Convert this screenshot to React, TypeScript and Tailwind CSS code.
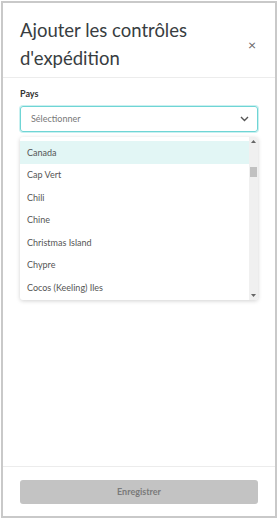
import React from "react";

const countries = [
  "Canada",
  "Cap Vert",
  "Chili",
  "Chine",
  "Christmas Island",
  "Chypre",
  "Cocos (Keeling) Iles",
];

export default function App() {
  return (
    <div
      className="w-[280px] h-[522px] bg-white p-[1px]"
      style={{ fontFamily: 'Lato, "Open Sans", sans-serif' }}
    >
      <div className="w-[276px] h-[517px] border-2 border-[#c9c9c9] flex flex-col">
        <div className="flex items-center justify-between pl-[17px] pr-[19px] pt-[14px] pb-[6px] border-b border-[#ececec] h-[75px]">
          <h1 className="text-[18.5px] leading-[28px] text-[#383d41] font-normal">
            Ajouter les contrôles d'expédition
          </h1>
          <span className="text-[#666] text-[14px] leading-none mt-[2px] ml-[10px]">×</span>
        </div>
        <div className="flex-1 px-[17px] pt-[10px]">
          <div className="text-[9px] font-bold text-[#333] mb-[6px] leading-[12px]">Pays</div>
          <div className="h-[26px] border border-[#6fd5d5] rounded-[3px] shadow-[0_0_0_1px_#c9f0f0] flex items-center justify-between pl-[10px] pr-[8px]">
            <span className="text-[9px] text-[#777]">Sélectionner</span>
            <svg width="9" height="6" viewBox="0 0 9 6">
              <path d="M1 1l3.5 3.5L8 1" stroke="#555" strokeWidth="1.4" fill="none" />
            </svg>
          </div>
          <div className="mt-[5px] h-[163px] bg-white rounded-[3px] shadow-[0_1px_4px_rgba(0,0,0,0.18)] flex overflow-hidden">
            <div className="flex-1 pt-[4px]">
              {countries.map((c, i) => (
                <div
                  key={c}
                  className={`h-[22.5px] flex items-center pl-[7px] text-[9px] text-[#555] ${
                    i === 0 ? "bg-[#e2f6f5]" : ""
                  }`}
                >
                  {c}
                </div>
              ))}
            </div>
            <div className="w-[9px] bg-[#f0f0f0] flex flex-col items-center py-[3px]">
              <svg width="5" height="3" viewBox="0 0 5 3">
                <path d="M0 3L2.5 0L5 3z" fill="#666" />
              </svg>
              <div className="w-[7px] h-[10px] bg-[#c1c1c1] mt-[24px]" />
              <div className="flex-1" />
              <svg width="5" height="3" viewBox="0 0 5 3">
                <path d="M0 0L2.5 3L5 0z" fill="#666" />
              </svg>
            </div>
          </div>
        </div>
        <div className="border-t border-[#ececec] px-[17px] pt-[13px] pb-[12px]">
          <div className="h-[24px] rounded-[3px] bg-[#c3c3c3] flex items-center justify-center text-[9px] font-bold text-[#7a7a7a]">
            Enregistrer
          </div>
        </div>
      </div>
    </div>
  );
}
